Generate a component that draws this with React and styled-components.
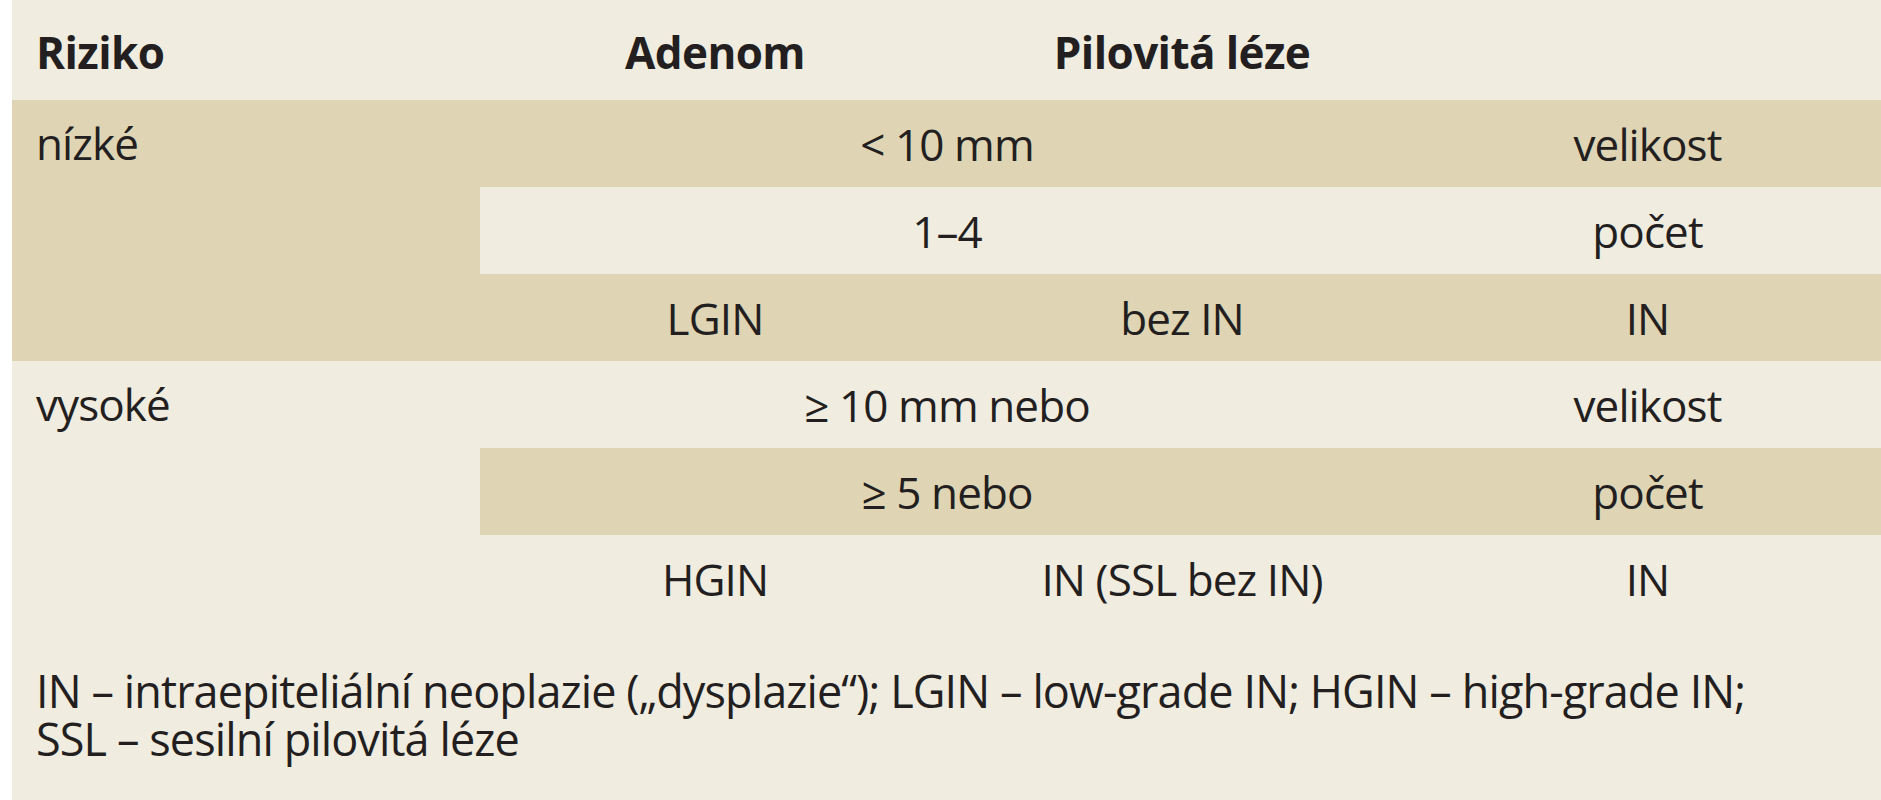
import React from 'react'
import styled, { createGlobalStyle } from 'styled-components'

const GlobalStyle = createGlobalStyle`
  html, body {
    margin: 0;
    padding: 0;
    background: #ffffff;
  }
  body {
    font-family: 'Open Sans', 'Noto Sans', sans-serif;
    color: #231f20;
  }
`

const LIGHT = '#f1ece0'
const DARK = '#dfd4b4'

const Page = styled.div`
  width: 1881px;
  height: 800px;
  padding-left: 12px;
  box-sizing: border-box;
  background: #ffffff;
  overflow: hidden;
`

const Panel = styled.div`
  height: 100%;
  background: ${LIGHT};
  display: flex;
  flex-direction: column;
`

const Table = styled.div`
  display: grid;
  grid-template-columns: 468px 470px 464px 1fr;
  grid-template-rows: 100px repeat(6, 87px);
`

const Cell = styled.div`
  grid-column: ${p => p.col || 'auto'};
  grid-row: ${p => p.row || 'auto'};
  background: ${p => (p.dark ? DARK : LIGHT)};
  display: flex;
  align-items: ${p => (p.top ? 'flex-start' : 'center')};
  justify-content: ${p => (p.left ? 'flex-start' : 'center')};
  padding-left: ${p => (p.left ? '24px' : '0')};
  font-size: 44px;
  letter-spacing: -0.9px;
  line-height: ${p => (p.top ? '87px' : '1')};
  white-space: nowrap;
`

const HeadCell = styled(Cell)`
  font-weight: 700;
  letter-spacing: -0.6px;
  padding-top: 4px;
  box-sizing: border-box;
`

const Footnote = styled.p`
  margin: 0;
  padding: 45px 0 0 24px;
  font-size: 45px;
  line-height: 48px;
  letter-spacing: -0.9px;
`

export default function App() {
  return (
    <>
      <GlobalStyle />
      <Page>
        <Panel>
          <Table>
            <HeadCell col="1" row="1" left>Riziko</HeadCell>
            <HeadCell col="2" row="1">Adenom</HeadCell>
            <HeadCell col="3" row="1">Pilovitá léze</HeadCell>
            <HeadCell col="4" row="1" />

            <Cell col="1" row="2 / span 3" dark left top>nízké</Cell>
            <Cell col="2 / span 2" row="2" dark>&lt; 10 mm</Cell>
            <Cell col="4" row="2" dark>velikost</Cell>
            <Cell col="2 / span 2" row="3">1–4</Cell>
            <Cell col="4" row="3">počet</Cell>
            <Cell col="2" row="4" dark>LGIN</Cell>
            <Cell col="3" row="4" dark>bez IN</Cell>
            <Cell col="4" row="4" dark>IN</Cell>

            <Cell col="1" row="5 / span 3" left top>vysoké</Cell>
            <Cell col="2 / span 2" row="5">≥ 10 mm nebo</Cell>
            <Cell col="4" row="5">velikost</Cell>
            <Cell col="2 / span 2" row="6" dark>≥ 5 nebo</Cell>
            <Cell col="4" row="6" dark>počet</Cell>
            <Cell col="2" row="7">HGIN</Cell>
            <Cell col="3" row="7">IN (SSL bez IN)</Cell>
            <Cell col="4" row="7">IN</Cell>
          </Table>
          <Footnote>
            IN – intraepiteliální neoplazie („dysplazie“); LGIN – low-grade IN; HGIN – high-grade IN;
            <br />
            SSL – sesilní pilovitá léze
          </Footnote>
        </Panel>
      </Page>
    </>
  )
}
